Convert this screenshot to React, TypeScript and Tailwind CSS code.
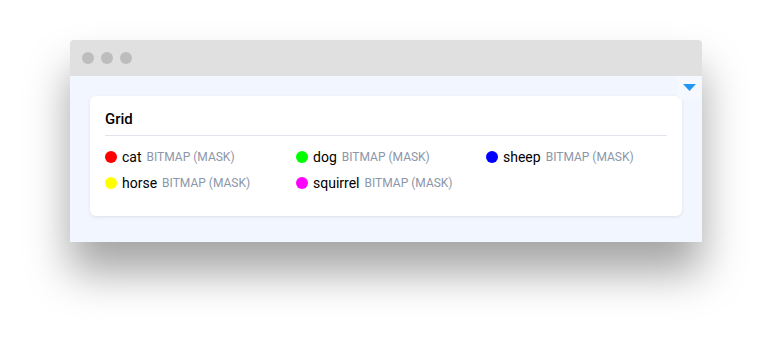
const items = [
  { name: "cat", color: "bg-[#ff0000]" },
  { name: "dog", color: "bg-[#00ff00]" },
  { name: "sheep", color: "bg-[#0000ff]" },
  { name: "horse", color: "bg-[#ffff00]" },
  { name: "squirrel", color: "bg-[#ff00ff]" },
];

export default function App() {
  return (
    <div className="h-[343px] w-[772px] overflow-hidden bg-white pl-[70px] pt-[40px] font-['Roboto',sans-serif]">
      <div className="w-[632px] rounded-t-[4px] shadow-[0_30px_44px_rgba(0,0,0,0.36)]">
        {/* title bar */}
        <div className="flex h-[36px] items-center gap-[7px] rounded-t-[4px] bg-[#e0e0e0] pl-[12px]">
          <span className="h-[12px] w-[12px] rounded-full bg-[#bdbdbd]" />
          <span className="h-[12px] w-[12px] rounded-full bg-[#bdbdbd]" />
          <span className="h-[12px] w-[12px] rounded-full bg-[#bdbdbd]" />
        </div>

        <div className="relative bg-[#f2f6fe] px-[20px] pb-[26px] pt-[20px]">
          <div className="absolute right-[1px] top-0 flex h-[23px] w-[24px] items-center justify-center bg-[#f5f8fe]">
            <svg width="13" height="7" viewBox="0 0 13 7">
              <path d="M0 0H13L6.5 7Z" fill="#2196f3" />
            </svg>
          </div>

          <div className="rounded-[6px] bg-white px-[15px] pb-[20px] pt-[13px] shadow-[0_1px_3px_rgba(60,70,110,0.12)]">
            <div className="border-b border-[#e1e4ec] pb-[6px] text-[15px] leading-[20px] font-medium text-black">
              Grid
            </div>
            <div className="mt-[8px] grid grid-cols-[191px_190px_181px]">
              {items.map((it) => (
                <div key={it.name} className="flex h-[26px] items-center">
                  <span className={`h-[12px] w-[12px] shrink-0 rounded-full ${it.color}`} />
                  <span className="ml-[5px] text-[14px] leading-[20px] text-black">{it.name}</span>
                  <span className="ml-[5px] text-[12px] leading-[20px] text-[#8c96a8]">BITMAP (MASK)</span>
                </div>
              ))}
            </div>
          </div>
        </div>
      </div>
    </div>
  );
}
